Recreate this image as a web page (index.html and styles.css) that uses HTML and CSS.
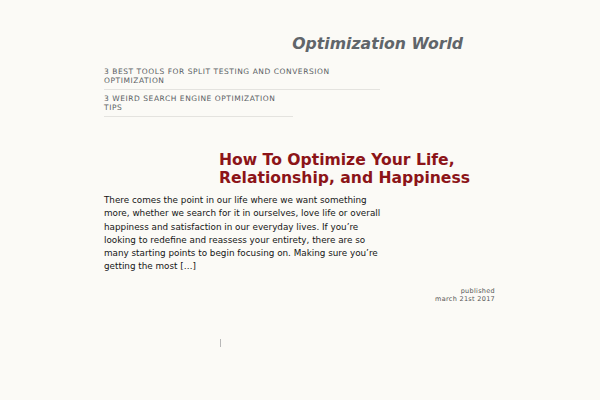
FILE: index.html
```html
<!DOCTYPE html>
<html>
<head>
<meta charset="utf-8">
<link rel="stylesheet" href="styles.css">
</head>
<body>
<div class="page">
  <header class="site-header">
    <h1 class="site-title">Optimization World</h1>
  </header>
  <nav class="nav">
    <a class="nav-item nav-item-1">3 Best Tools For Split Testing And Conversion Optimization</a>
    <a class="nav-item nav-item-2">3 Weird Search Engine Optimization Tips</a>
  </nav>
  <article class="post">
    <h2 class="post-title">How To Optimize Your Life, Relationship, and Happiness</h2>
    <p class="post-excerpt">There comes the point in our life where we want something more, whether we search for it in ourselves, love life or overall happiness and satisfaction in our everyday lives. If you’re looking to redefine and reassess your entirety, there are so many starting points to begin focusing on. Making sure you’re getting the most […]</p>
    <div class="post-meta">
      <div>published</div>
      <div>march 21st 2017</div>
    </div>
  </article>
  <div class="footer">
    <span class="pipe"></span>
  </div>
</div>
</body>
</html>
```
FILE: styles.css
```css
html, body {
  margin: 0;
  padding: 0;
  background: #fbfaf6;
  font-family: "DejaVu Sans", sans-serif;
}
.page {
  width: 600px;
  height: 400px;
  overflow: hidden;
}
.site-header {
  display: flex;
  justify-content: flex-end;
  padding: 34px 137px 0 0;
}
.site-title {
  margin: 0;
  font-size: 15.7px;
  line-height: 20px;
  font-weight: bold;
  font-style: italic;
  color: #60656a;
}
.nav {
  display: flex;
  flex-direction: column;
  align-items: flex-start;
  padding: 12px 0 0 104px;
}
.nav-item {
  display: block;
  font-size: 7.5px;
  line-height: 9px;
  letter-spacing: 0.55px;
  text-transform: uppercase;
  color: #5a5e63;
  padding: 1px 0 4px;
  border-bottom: 1px solid #e4e3df;
  margin-bottom: 3px;
}
.nav-item-1 { width: 276px; }
.nav-item-2 { width: 189px; }
.post {
  padding-top: 31px;
}
.post-title {
  margin: 0 0 0 219px;
  width: 258px;
  font-size: 15.6px;
  line-height: 18px;
  font-weight: bold;
  color: #8c1418;
}
.post-excerpt {
  margin: 7px 0 0 104px;
  width: 282px;
  font-size: 8.8px;
  line-height: 13.3px;
  color: #151515;
}
.post-meta {
  margin: 13px 105px 0 0;
  text-align: right;
  font-size: 6.5px;
  line-height: 8px;
  letter-spacing: 0.3px;
  color: #555;
}
.footer {
  padding: 36px 0 0 220px;
}
.pipe {
  display: block;
  width: 1px;
  height: 8px;
  background: #b8b8b8;
}
```
